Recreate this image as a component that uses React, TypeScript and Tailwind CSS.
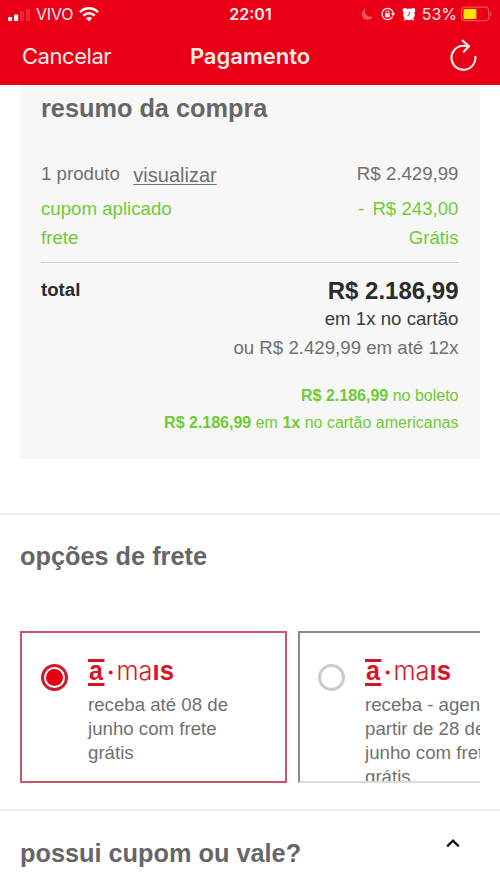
import React from 'react';

interface ShippingOption {
  id: number;
  lines: string[];
  selected: boolean;
}

const shippingOptions: ShippingOption[] = [
  { id: 1, lines: ['receba até 08 de', 'junho com frete', 'grátis'], selected: true },
  { id: 2, lines: ['receba - agende a', 'partir de 28 de', 'junho com frete', 'grátis'], selected: false },
];

const SignalIcon = () => (
  <svg className="h-4 w-6 shrink-0" viewBox="0 0 24 16" fill="#fff">
    <rect x="0" y="11" width="4.2" height="4" rx="1" />
    <rect x="6" y="8.5" width="4.2" height="6.5" rx="1" />
    <rect x="12" y="5" width="4" height="10" rx="1" opacity="0.15" />
    <rect x="18" y="2.5" width="4" height="12.5" rx="1" opacity="0.15" />
  </svg>
);

const WifiIcon = () => (
  <svg className="h-4 w-5 shrink-0" viewBox="0 0 20 16" fill="none" stroke="#fff" strokeWidth="2.5">
    <path d="M1 6.2C6 1 14 1 19 6.2" />
    <path d="M4.3 9.6c3.2-3.2 8.2-3.2 11.4 0" />
    <path d="M10 15.4 6.9 12.2c1.7-1.6 4.5-1.6 6.2 0z" fill="#fff" stroke="none" />
  </svg>
);

const MoonIcon = () => (
  <svg className="h-3.5 w-3.5" viewBox="0 0 14 14" fill="#f4505f">
    <path d="M5.6 1.6A5.8 5.8 0 1 0 12.8 9.4 5.7 5.7 0 0 1 5.6 1.6z" />
  </svg>
);

const RotationLockIcon = () => (
  <svg className="h-3.5 w-4" viewBox="0 0 16 14" fill="none" stroke="#ffe9e6" strokeWidth="1.3">
    <path d="M12.6 9.6a5.6 5.6 0 1 1 .6-3.2" />
    <path d="M10.8 6.2h4.6l-2.3 3z" fill="#ffe9e6" stroke="none" />
    <rect x="5" y="6.2" width="5" height="4" rx="0.6" fill="#ffe9e6" stroke="none" />
    <path d="M6 6.4V5.2a1.5 1.5 0 0 1 3 0v1.2" strokeWidth="1" />
  </svg>
);

const AlarmIcon = () => (
  <svg className="h-3.5 w-3.5" viewBox="0 0 14 14" fill="#fff">
    <circle cx="7" cy="7.4" r="5.8" />
    <circle cx="3" cy="3.2" r="2.3" />
    <circle cx="11" cy="3.2" r="2.3" />
    <path d="M2.4 13.2 4 11.2M11.6 13.2 10 11.2" stroke="#fff" strokeWidth="1.6" />
    <path d="M7.2 4.6v3.2L5.4 8.8" stroke="#e90016" strokeWidth="0.9" fill="none" />
  </svg>
);

const BatteryIcon = () => (
  <svg className="h-4 w-8" viewBox="0 0 32 16">
    <rect x="0.7" y="1.2" width="27" height="13.4" rx="3.2" fill="none" stroke="#f4505a" strokeWidth="1.2" />
    <rect x="2.6" y="3" width="12.8" height="10" rx="1" fill="#ffe500" />
    <path d="M29.3 5.6c1.6.6 1.6 4.2 0 4.8z" fill="#f4505a" />
  </svg>
);

const ReloadIcon = () => (
  <svg className="h-8 w-7" viewBox="0 0 28 32" fill="none" stroke="#fff1ee" strokeWidth="2.1" strokeLinecap="round" strokeLinejoin="round">
    <path d="M18.8 7.2C16 6.6 14.5 6.6 13 6.8A12 12 0 1 0 25.4 17.8" />
    <path d="M12.6 1.6l6.4 5.6-5.2 5.6" />
  </svg>
);

const MaisLogo = () => (
  <svg className="h-7 w-[88px] overflow-visible font-['Liberation_Sans',sans-serif]" viewBox="0 0 88 28" fill="#d81426">
    <rect x="0" y="0" width="16.5" height="3" />
    <rect x="0" y="24" width="16.5" height="3" />
    <text x="1" y="21" fontSize="27" fontWeight="700" textLength="14" lengthAdjust="spacingAndGlyphs">a</text>
    <circle cx="22.7" cy="13.5" r="2" />
    <text x="28.5" y="20.5" fontSize="26" fontWeight="300" fontFamily="Inter" textLength="36" lengthAdjust="spacingAndGlyphs">ma</text>
    <text x="64.5" y="20.5" fontSize="27" fontWeight="700" textLength="21.5" lengthAdjust="spacingAndGlyphs">ıs</text>
  </svg>
);

const Radio: React.FC<{ checked: boolean }> = ({ checked }) => (
  <div
    className={
      checked
        ? 'flex size-[27px] shrink-0 items-center justify-center rounded-full border-[3px] border-[#cf1a2c]'
        : 'size-[27px] shrink-0 rounded-full border-[3px] border-[#cbcbcb]'
    }
  >
    {checked && <div className="size-[17px] rounded-full bg-[#e60014]" />}
  </div>
);

const Header = () => (
  <header className="h-[85px] bg-[#e90016] font-['Inter',sans-serif] text-[#ffece9]">
    <div className="grid h-7 grid-cols-3 items-center pr-[7px] pl-2">
      <div className="flex items-center">
        <SignalIcon />
        <span className="ml-1 text-[16px] leading-7 tracking-[-0.2px]">VIVO</span>
        <span className="ml-[6px] flex"><WifiIcon /></span>
      </div>
      <span className="text-center text-[16px] font-semibold">22:01</span>
      <div className="flex items-center justify-end">
        <MoonIcon />
        <span className="ml-1.5 flex"><RotationLockIcon /></span>
        <span className="ml-1.5 flex"><AlarmIcon /></span>
        <span className="ml-1.5 text-[16px]">53%</span>
        <span className="ml-1 flex"><BatteryIcon /></span>
      </div>
    </div>
    <div className="grid h-[57px] grid-cols-3 items-center px-[22px]">
      <span className="text-[22px] tracking-[-0.45px]">Cancelar</span>
      <span className="text-center text-[22px] font-semibold">Pagamento</span>
      <span className="flex justify-end pb-1"><ReloadIcon /></span>
    </div>
  </header>
);

const Summary = () => (
  <section className="mx-5 h-[374px] bg-[#f7f7f7] pt-2 pr-[21.5px] pl-[21px] text-[18.67px] leading-[29px] text-[#707070]">
    <h2 className="text-[25.3px] leading-[30px] font-bold text-[#666]">resumo da compra</h2>
    <div className="mt-9 flex justify-between">
      <div className="flex">
        <span>1 produto</span>
        <a className="ml-[13.5px] pt-0.5 text-[20px] underline decoration-1 underline-offset-2">visualizar</a>
      </div>
      <span>R$ 2.429,99</span>
    </div>
    <div className="mt-1 flex justify-between text-[#6fcb35]">
      <span>cupom aplicado</span>
      <span className="flex gap-2">
        <span>-</span>
        <span>R$ 243,00</span>
      </span>
    </div>
    <div className="flex justify-between text-[#6fcb35]">
      <span>frete</span>
      <span>Grátis</span>
    </div>
    <div className="mt-2.5 border-t border-[#cfcfcf] pt-3.5 text-right">
      <div className="flex justify-between leading-7 font-bold text-[#2b2b2b]">
        <span className="-mt-px">total</span>
        <span className="text-[24px]">R$ 2.186,99</span>
      </div>
      <p className="leading-7 text-[#3a3a3a]">em 1x no cartão</p>
      <p className="leading-[30px]">ou R$ 2.429,99 em até 12x</p>
    </div>
    <div className="mt-[19px] text-right text-[16px] leading-[27px] text-[#6fcb35]">
      <p><b>R$ 2.186,99</b> no boleto</p>
      <p><b>R$ 2.186,99</b> em <b>1x</b> no cartão americanas</p>
    </div>
  </section>
);

const ShippingCard: React.FC<{ option: ShippingOption }> = ({ option }) => (
  <div
    className={
      option.selected
        ? 'flex h-[152px] w-[267px] shrink-0 overflow-hidden border-2 border-[#c4576a] pt-[26px] pl-[19px]'
        : 'flex h-[152px] w-[267px] shrink-0 overflow-hidden border-2 border-[#8a8a8a] border-b-[#dcdcdc] pt-[26px] pl-[18.5px]'
    }
  >
    <div className="pt-[5px]">
      <Radio checked={option.selected} />
    </div>
    <div className="ml-5 text-[18.67px] leading-6 whitespace-nowrap text-[#707070]">
      <MaisLogo />
      <div className="mt-1.5">
        {option.lines.map((line) => (
          <p key={line}>{line}</p>
        ))}
      </div>
    </div>
  </div>
);

const App = () => {
  return (
    <div className="h-[890px] w-[500px] overflow-hidden bg-white font-['Liberation_Sans',sans-serif]">
      <Header />
      <Summary />
      <section className="mt-[54px] h-[296px] border-t-2 border-[#ededed] px-5 pt-[26px]">
        <h2 className="text-[25.3px] leading-[30px] font-bold text-[#666]">opções de frete</h2>
        <div className="mt-[60px] flex gap-[10.5px] overflow-hidden">
          {shippingOptions.map((option) => (
            <ShippingCard key={option.id} option={option} />
          ))}
        </div>
      </section>
      <section className="flex justify-between border-t-2 border-[#ededed] px-5 pt-[27px]">
        <h2 className="text-[25.3px] leading-[30px] font-bold text-[#666]">possui cupom ou vale?</h2>
        <svg className="mr-5 h-2.5 w-3.5" viewBox="0 0 14 10" fill="none" stroke="#111" strokeWidth="2.2">
          <path d="M1.2 8.4 7 2.6l5.8 5.8" />
        </svg>
      </section>
    </div>
  );
};

export default App;
